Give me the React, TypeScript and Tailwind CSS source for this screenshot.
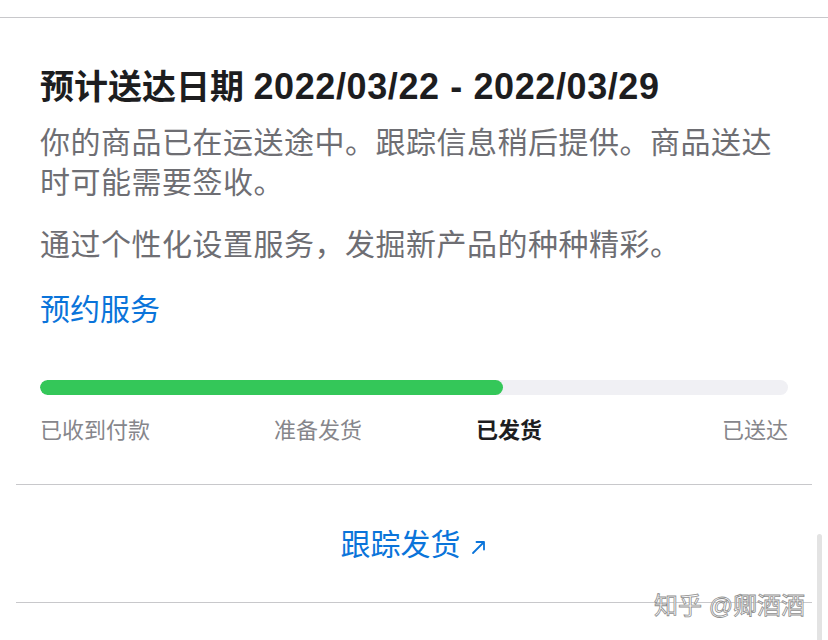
import React from 'react';

const steps = [
  { label: '已收到付款', className: '' },
  { label: '准备发货', className: 'ml-[124px]' },
  { label: '已发货', className: 'ml-[114px] font-bold text-[#1d1d1f]', current: true },
  { label: '已送达', className: 'ml-auto' },
];

function ArrowUpRight() {
  return (
    <svg width="18" height="18" viewBox="0 0 18 18" fill="none" className="ml-[9px] mt-[13px]">
      <path d="M3 15 L14 4 M6.5 4 H14 V11.5" stroke="#0a74da" strokeWidth="1.8" strokeLinecap="round" strokeLinejoin="round" />
    </svg>
  );
}

export default function App() {
  return (
    <div
      className="relative w-[828px] h-[640px] overflow-hidden bg-white"
      style={{ fontFamily: '"Liberation Sans", "Noto Sans CJK SC", sans-serif' }}
    >
      <div className="h-[17px]" />
      <div className="h-px bg-[#c8c8cb]" />

      <div className="px-[40px] pt-[49px]">
        {/* delivery window */}
        <h1 className="text-[34px] leading-[40px] font-bold text-[#1d1d1f]">
          预计送达日期{' '}
          <span className="text-[36px] tracking-[0.6px]">2022/03/22 - 2022/03/29</span>
        </h1>
        <p className="mt-[16px] text-[30px] leading-[40px] text-[#6e6e73] tracking-[0.5px]">
          你的商品已在运送途中。跟踪信息稍后提供。商品送达时可能需要签收。
        </p>
        <p className="mt-[22px] text-[30px] leading-[40px] text-[#6e6e73] tracking-[0.5px]">
          通过个性化设置服务，发掘新产品的种种精彩。
        </p>
        <a className="block mt-[25px] text-[30px] leading-[40px] text-[#0a74da]">预约服务</a>

        {/* progress */}
        <div className="mt-[50px] h-[15px] w-[748px] rounded-full bg-[#f0f0f4] overflow-hidden">
          <div className="h-full rounded-full bg-[#34c759]" style={{ width: '463px' }} />
        </div>
        <div className="mt-[21px] flex text-[22px] leading-[30px] text-[#86868b]">
          {steps.map((s) => (
            <span key={s.label} className={s.className}>
              {s.label}
            </span>
          ))}
        </div>
      </div>

      <div className="mx-4 mt-[38px] h-px bg-[#c8c8cb]" />

      <div className="flex justify-center pt-[40px] pb-[37px]">
        <a className="flex items-start text-[30px] leading-[40px] text-[#0a74da]">
          跟踪发货
          <ArrowUpRight />
        </a>
      </div>

      <div className="mx-4 h-px bg-[#c8c8cb]" />

      {/* scrollbar */}
      <div className="absolute right-[6px] top-[534px] h-[120px] w-[5px] rounded-full bg-[#e3e3e3]" />

      {/* watermark */}
      <div className="absolute left-[654px] top-[591px] text-[24px] leading-[30px] text-white [-webkit-text-stroke:0.8px_#8e8e8e]">
        知乎 @卿酒酒
      </div>
    </div>
  );
}
